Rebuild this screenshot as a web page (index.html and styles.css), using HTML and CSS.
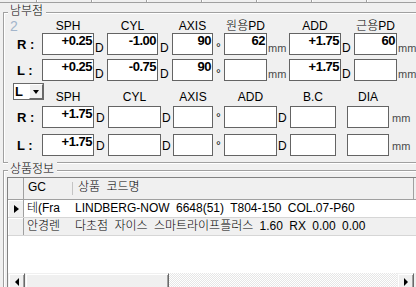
FILE: index.html
```html
<!DOCTYPE html>
<html lang="ko">
<head>
<meta charset="utf-8">
<title>남부점</title>
<link rel="stylesheet" href="styles.css">
</head>
<body>
<div class="topstrip"><span></span><span></span><span></span><span></span><span></span><span></span><span></span><span></span><span></span></div>

<div class="grp g-rx">
  <div class="legend">남부점</div>

  <div class="row g1 hdr1">
    <div class="num">2</div>
    <div class="h">SPH</div><span></span>
    <div class="h">CYL</div><span></span>
    <div class="h">AXIS</div><span></span>
    <div class="h">원용PD</div><span></span>
    <div class="h">ADD</div><span></span>
    <div class="h">근용PD</div>
  </div>
  <div class="row g1 fld">
    <div class="lab">R :</div>
    <div class="box">+0.25</div><div class="u">D</div>
    <div class="box">-1.00</div><div class="u u2">D</div>
    <div class="box">90</div><div class="u deg">°</div>
    <div class="box">62</div><div class="u mm">mm</div>
    <div class="box">+1.75</div><div class="u">D</div>
    <div class="box">60</div><div class="u mm">mm</div>
  </div>
  <div class="row g1 fld second">
    <div class="lab">L :</div>
    <div class="box">+0.25</div><div class="u">D</div>
    <div class="box">-0.75</div><div class="u u2">D</div>
    <div class="box">90</div><div class="u deg">°</div>
    <div class="box"></div><div class="u mm">mm</div>
    <div class="box">+1.75</div><div class="u">D</div>
    <div class="box"></div><div class="u mm">mm</div>
  </div>

  <div class="row g2 hdr2">
    <div class="combo"><div class="val">L</div><div class="btn"><i></i></div></div>
    <div class="h">SPH</div><span></span>
    <div class="h">CYL</div><span></span>
    <div class="h">AXIS</div><span></span>
    <div class="h">ADD</div><span></span>
    <div class="h">B.C</div><span></span>
    <div class="h">DIA</div>
  </div>
  <div class="row g2 fld low">
    <div class="lab">R :</div>
    <div class="box">+1.75</div><div class="u u2">D</div>
    <div class="box"></div><div class="u">D</div>
    <div class="box"></div><div class="u deg">°</div>
    <div class="box"></div><div class="u">D</div>
    <div class="box"></div><span></span>
    <div class="box"></div><div class="u mm">mm</div>
  </div>
  <div class="row g2 fld low third">
    <div class="lab">L :</div>
    <div class="box">+1.75</div><div class="u u2">D</div>
    <div class="box"></div><div class="u">D</div>
    <div class="box"></div><div class="u deg">°</div>
    <div class="box"></div><div class="u">D</div>
    <div class="box"></div><span></span>
    <div class="box"></div><div class="u mm">mm</div>
  </div>
</div>

<div class="grp g-prod">
  <div class="legend">상품정보</div>
  <div class="grid">
    <div class="g-row g-head">
      <div class="ind"></div>
      <div class="c-gc">GC</div>
      <div class="c-name">상품 코드명</div>
    </div>
    <div class="g-row g-data">
      <div class="ind"><i class="cur"></i></div>
      <div class="c-gc">테(Fra</div>
      <div class="c-name">LINDBERG-NOW 6648(51) T804-150 COL.07-P60</div>
    </div>
    <div class="g-row g-data alt">
      <div class="ind"></div>
      <div class="c-gc">안경렌</div>
      <div class="c-name">다초점 자이스 스마트라이프플러스 1.60 RX 0.00 0.00</div>
    </div>
    <div class="g-empty"></div>
    <div class="hscroll">
      <div class="sb-btn"><i class="arr-l"></i></div>
      <div class="sb-thumb"></div>
      <div class="sb-track"></div>
      <div class="sb-btn"><i class="arr-r"></i></div>
      <div class="sb-end"></div>
    </div>
  </div>
</div>
</body>
</html>
```

FILE: styles.css
```css
* { box-sizing: border-box; }
html, body { margin: 0; padding: 0; }
body {
  width: 416px;
  height: 287px;
  overflow: hidden;
  background: #f0f0f0;
  font-family: "Liberation Sans", "Noto Sans CJK KR", sans-serif;
  font-size: 12px;
  font-weight: 300;
  color: #000;
}

/* strip of control bottoms at the very top */
.topstrip { display: flex; height: 3px; overflow: hidden; }
.topstrip span {
  flex: 0 0 55px;
  height: 3px;
  border-bottom: 1px solid #a0a0a0;
  border-right: 1px solid #a0a0a0;
  box-shadow: 1px 0 0 #fff;
}
.topstrip span:first-child { margin-left: -18px; }

/* etched group boxes */
.grp {
  margin-left: 3px;
  margin-right: -20px;
  border: 1px solid #a0a0a0;
  box-shadow: inset 1px 1px 0 #fff, 0 1px 0 #fff;
}
.g-rx { margin-top: 9px; padding-bottom: 8px; }
.g-prod { margin-top: 7px; }
.legend {
  margin: -9px 0 0 4px;
  width: fit-content;
  height: 14px;
  padding: 0 3px 0 2px;
  line-height: 14px;
  background: #f0f0f0;
  white-space: nowrap;
}

/* prescription rows */
.row { display: grid; }
.g1 { grid-template-columns: 38px 52px 13px 51px 14px 41px 11px 43px 22px 52px 13px 43px auto; }
.g2 { grid-template-columns: 38px 52px 14px 53px 12px 40px 11px 53px 13px 46px 11px 42px auto; }
.hdr1 { height: 15px; align-items: end; }
.hdr2 { height: 27px; align-items: end; }
.fld { height: 20px; }
.second { margin-top: 6px; }
.third { margin-top: 8px; }

.num {
  padding-left: 6px;
  font-size: 14px;
  line-height: 14px;
  color: #a3b5cb;
}
.h {
  text-align: center;
  line-height: 14px;
  white-space: nowrap;
}
.hdr2 .h { padding-bottom: 2px; }

.lab {
  padding: 2px 0 0 13px;
  font-weight: bold;
  font-size: 13px;
  line-height: 20px;
  white-space: nowrap;
}
.box {
  background: #fff;
  border: 1px solid #646464;
  text-align: right;
  padding-right: 1px;
  font-weight: bold;
  font-size: 13px;
  letter-spacing: -0.5px;
  line-height: 14px;
  white-space: nowrap;
  overflow: hidden;
}
.u {
  align-self: end;
  line-height: 14px;
  padding-left: 1px;
  white-space: nowrap;
}
.u2 { padding-left: 2px; }
.deg { padding-left: 3px; }
.mm { font-size: 11px; color: #4a4a4a; }
.low .u { padding-bottom: 3px; }
.g2 .mm { padding-left: 3px; }

/* combo box */
.combo {
  align-self: start;
  margin: 4px 0 0 9px;
  width: 31px;
  height: 17px;
  border: 1px solid #6a6a6a;
  background: #fff;
  display: flex;
}
.combo .val {
  flex: 1;
  padding: 1px 0 0 1px;
  font-weight: bold;
  font-size: 13px;
  line-height: 14px;
}
.combo .btn {
  flex: 0 0 14px;
  height: 15px;
  background: #f0f0f0;
  border: 1px solid;
  border-color: #fff #696969 #696969 #fff;
  display: flex;
  align-items: center;
  justify-content: center;
}
.combo .btn i {
  width: 0;
  height: 0;
  border-left: 3px solid transparent;
  border-right: 3px solid transparent;
  border-top: 4px solid #000;
}

/* data grid */
.grid {
  margin: 1px 0 0 3px;
  width: 412px;
  height: 114px;
  border: 1px solid #828282;
  background: #fff;
  display: flex;
  flex-direction: column;
}
.g-row { display: flex; flex: 0 0 auto; white-space: nowrap; }
.ind { flex: 0 0 16px; border-right: 1px solid #a0a0a0; }
.c-gc { flex: 0 0 49px; overflow: hidden; }
.c-name { flex: 0 0 341px; overflow: hidden; word-spacing: 3px; }

.g-head {
  height: 22px;
  line-height: 18px;
  background: #f0f0f0;
  border-bottom: 1px solid #a0a0a0;
}
.g-head .c-gc {
  padding-left: 4px;
  background: linear-gradient(#c4c4c4, #c4c4c4) right 4px / 1px 13px no-repeat;
}
.g-head .c-name { padding-left: 5px; border-right: 1px solid #a0a0a0; }

.g-data {
  height: 18px;
  line-height: 16px;
  border-bottom: 1px solid #d6d6d6;
}
.g-data .ind {
  background: #f0f0f0;
  box-shadow: inset 1px 1px 0 #fff;
  display: flex;
  align-items: center;
  justify-content: center;
}
.g-data .c-gc { padding-left: 3px; }
.g-data .c-name { padding-left: 2px; }
.alt { background: #f0f0f0; }
.cur {
  width: 0;
  height: 0;
  margin-left: 1px;
  border-left: 5px solid #000;
  border-top: 4px solid transparent;
  border-bottom: 4px solid transparent;
}
.g-empty { flex: 1; }

/* horizontal scrollbar */
.hscroll { flex: 0 0 17px; display: flex; }
.sb-btn, .sb-thumb {
  background: #f0f0f0;
  border: 1px solid;
  border-color: #f0f0f0 #696969 #696969 #f0f0f0;
  box-shadow: inset 1px 1px 0 #fff, inset -1px -1px 0 #a0a0a0;
}
.sb-btn {
  flex: 0 0 17px;
  display: flex;
  align-items: center;
  justify-content: center;
}
.sb-thumb { flex: 0 0 144px; }
.sb-track {
  flex: 0 0 228px;
  background: repeating-conic-gradient(#e6e6e6 0 25%, #fff 0 50%) 0 0 / 2px 2px;
}
.sb-end { flex: 1; background: #f0f0f0; }
.arr-l, .arr-r { width: 0; height: 0; border-top: 4px solid transparent; border-bottom: 4px solid transparent; }
.arr-l { border-right: 4px solid #000; }
.arr-r { border-left: 4px solid #000; }
```
